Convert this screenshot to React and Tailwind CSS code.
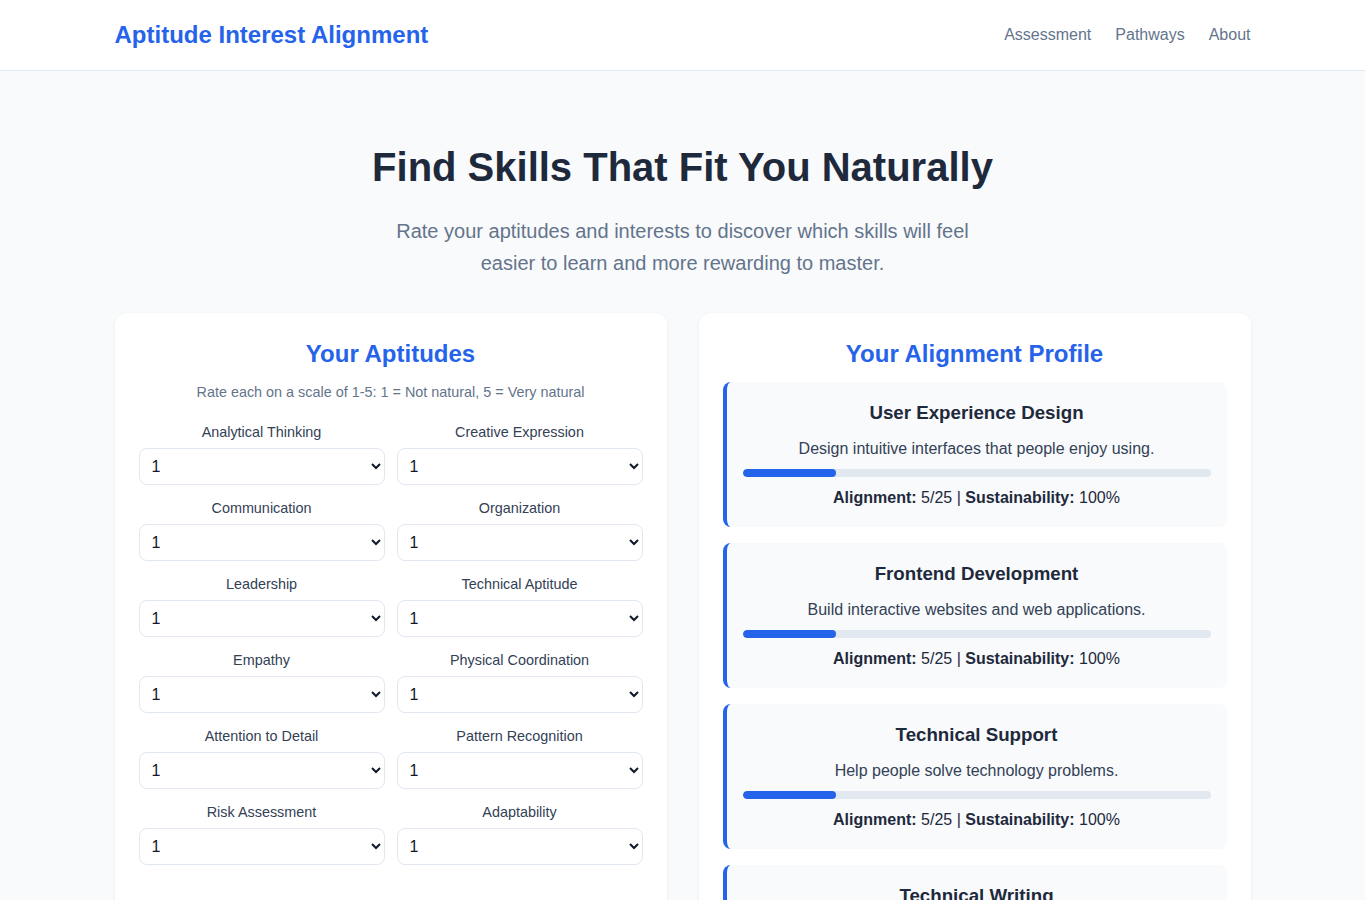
import React, { useState } from 'react';

const aptitudes = [
    'Analytical Thinking', 'Creative Expression',
    'Communication', 'Organization',
    'Leadership', 'Technical Aptitude',
    'Empathy', 'Physical Coordination',
    'Attention to Detail', 'Pattern Recognition',
    'Risk Assessment', 'Adaptability',
];

const interests = [
    'Technology', 'Arts & Design',
    'Helping Others', 'Business',
    'Science', 'Writing',
];

const skills = [
    { name: 'User Experience Design', desc: 'Design intuitive interfaces that people enjoy using.' },
    { name: 'Frontend Development', desc: 'Build interactive websites and web applications.' },
    { name: 'Technical Support', desc: 'Help people solve technology problems.' },
    { name: 'Technical Writing', desc: 'Create clear documentation and user guides.' },
];

const RatingField = ({ label }) => (
    <div className="flex flex-col">
        <label className="text-[14.4px] leading-5 text-[#334155] text-center mb-[6px]">{label}</label>
        <select
            defaultValue="1"
            className="h-[37px] w-full bg-white border border-[#e2e8f0] rounded-lg pl-[8px] pr-2 text-base text-[#111827]"
        >
            {[1, 2, 3, 4, 5].map(n => <option key={n} value={n}>{n}</option>)}
        </select>
    </div>
);

const App = () => {
    const [score] = useState(5);

    return (
        <div className="min-h-screen bg-[#f8fafc] font-['Liberation_Sans',Arial,sans-serif] text-[#1e293b]">
            {/* Header */}
            <header className="bg-white border-b border-[#e2e8f0]">
                <div className="max-w-[1200px] mx-auto px-8 h-[70px] flex items-center justify-between">
                    <h1 className="text-2xl font-bold text-[#2563eb]">Aptitude Interest Alignment</h1>
                    <nav className="flex gap-6 text-base text-[#64748b]">
                        <a href="#">Assessment</a>
                        <a href="#">Pathways</a>
                        <a href="#">About</a>
                    </nav>
                </div>
            </header>

            <main className="max-w-[1200px] mx-auto px-8 pt-[72px] pb-12">
                <section className="text-center">
                    <h2 className="text-[40px] leading-[48px] font-bold text-[#1e293b]">Find Skills That Fit You Naturally</h2>
                    <p className="mt-6 mx-auto max-w-[600px] text-xl leading-8 text-[#64748b]">
                        Rate your aptitudes and interests to discover which skills will feel easier to learn and more rewarding to master.
                    </p>
                </section>

                <div className="mt-[34px] grid grid-cols-2 gap-8 items-start">
                    {/* Left: inputs */}
                    <div className="bg-white rounded-xl shadow-[0_1px_4px_rgba(15,23,42,0.06)] px-6 pt-[25px] pb-6">
                        <h3 className="text-2xl leading-8 font-bold text-[#2563eb] text-center mb-[12px]">Your Aptitudes</h3>
                        <p className="text-[14.4px] leading-5 text-[#64748b] text-center mb-5">Rate each on a scale of 1-5: 1 = Not natural, 5 = Very natural</p>
                        <div className="grid grid-cols-2 gap-x-3 gap-y-[13px]">
                            {aptitudes.map(a => <RatingField key={a} label={a} />)}
                        </div>

                        <h3 className="mt-[29px] text-2xl leading-8 font-bold text-[#2563eb] text-center mb-[12px]">Your Interests</h3>
                        <p className="text-[14.4px] leading-5 text-[#64748b] text-center mb-5">Rate each on a scale of 1-5: 1 = Not interested, 5 = Very interested</p>
                        <div className="grid grid-cols-2 gap-x-3 gap-y-[13px]">
                            {interests.map(a => <RatingField key={a} label={a} />)}
                        </div>
                    </div>

                    {/* Right: results */}
                    <div className="bg-white rounded-xl shadow-[0_1px_4px_rgba(15,23,42,0.06)] px-6 pt-[25px] pb-6">
                        <h3 className="text-2xl leading-8 font-bold text-[#2563eb] text-center mb-[12px]">Your Alignment Profile</h3>
                        <div className="flex flex-col gap-4">
                            {skills.map(s => (
                                <div key={s.name} className="bg-[#f8fafc] border-l-4 border-[#2563eb] rounded-lg px-4 pt-[17px] pb-[17px] text-center">
                                    <h4 className="text-[18.72px] leading-[27px] font-bold text-[#1e293b] mb-[11px]">{s.name}</h4>
                                    <p className="text-base leading-6 text-[#334155]">{s.desc}</p>
                                    <div className="mt-2 h-2 w-full bg-[#e2e8f0] rounded-full overflow-hidden">
                                        <div className="h-full bg-[#2563eb] rounded-full" style={{ width: `${(score / 25) * 100}%` }}></div>
                                    </div>
                                    <p className="mt-[9px] text-base leading-6 text-[#1e293b]">
                                        <strong>Alignment:</strong> {score}/25 | <strong>Sustainability:</strong> 100%
                                    </p>
                                </div>
                            ))}
                        </div>
                    </div>
                </div>
            </main>
        </div>
    );
};

export default App;
